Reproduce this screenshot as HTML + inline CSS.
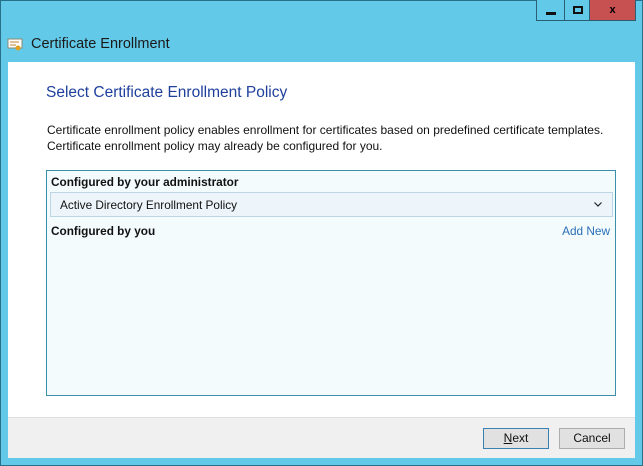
<!DOCTYPE html>
<html><head><meta charset="utf-8"><style>
*{margin:0;padding:0;box-sizing:border-box}
body{width:643px;height:466px;background:#63c9e8;position:relative;overflow:hidden;font-family:"Liberation Sans",sans-serif;box-shadow:inset 0 0 0 1px #2a6f8a}
.btn{position:absolute;top:0;height:21px;border:1px solid #2a5f73;border-top:none}
#min{left:536px;width:29px;background:#63c9e8}
#max{left:564px;width:26px;background:#63c9e8}
#cls{left:589px;width:47px;background:#c75050;color:#000;font-weight:bold;font-size:11px;text-align:center;line-height:20px}
#title{position:absolute;left:31px;top:36px;font-size:14.5px;color:#1a1a1a}
#content{position:absolute;left:8px;top:62px;width:627px;height:396px;background:#fff}
#foot{position:absolute;left:0;top:355px;width:627px;height:41px;background:#f0f0f0;border-top:1px solid #dfdfdf}
h1{position:absolute;left:38px;top:22px;font-size:15.5px;font-weight:normal;color:#1e3f9c}
#desc{position:absolute;left:39px;top:60px;font-size:12px;line-height:16px;color:#111}
#panel{position:absolute;left:38px;top:108px;width:570px;height:226px;border:1px solid #3b8fa8;background:#f3fbfd}
.lbl{position:absolute;left:4px;font-size:11.8px;font-weight:bold;color:#111}
#dd{position:absolute;left:3px;top:21px;width:563px;height:25px;border:1px solid #bcd6e4;background:#eef5fa;font-size:11.8px;color:#111;padding:5px 0 0 9px}
#add{position:absolute;right:5px;top:53px;font-size:11.8px;color:#2a6fb5}
.b{position:absolute;top:10px;height:21px;font-size:12px;text-align:center;line-height:19px;color:#111}
</style></head><body>
<div class="btn" id="min"><div style="position:absolute;left:9px;top:12px;width:10px;height:3px;background:#111"></div></div>
<div class="btn" id="max"><div style="position:absolute;left:8px;top:6px;width:10px;height:8px;border:2px solid #111"></div></div>
<div class="btn" id="cls">x</div>
<svg style="position:absolute;left:7px;top:37px" width="16" height="15"><rect x="1" y="2" width="14" height="9" fill="#fff" stroke="#8a8a70"/><line x1="3" y1="5" x2="12" y2="5" stroke="#c08030"/><line x1="3" y1="8" x2="9" y2="8" stroke="#c08030"/><circle cx="11" cy="11" r="2.5" fill="#e0a020"/></svg>
<div id="title">Certificate Enrollment</div>
<div id="content">
<h1>Select Certificate Enrollment Policy</h1>
<div id="desc">Certificate enrollment policy enables enrollment for certificates based on predefined certificate templates.<br>Certificate enrollment policy may already be configured for you.</div>
<div id="panel">
<div class="lbl" style="top:4px">Configured by your administrator</div>
<div id="dd">Active Directory Enrollment Policy<svg style="position:absolute;right:10px;top:9px" width="8" height="5"><path d="M0.5 0.5L4 4L7.5 0.5" fill="none" stroke="#222" stroke-width="1.2"/></svg></div>
<div class="lbl" style="top:53px">Configured by you</div>
<div id="add">Add New</div>
</div>
<div id="foot">
<div class="b" style="left:475px;width:66px;border:1px solid #3c7fb1;background:#e1e1e1"><u>N</u>ext</div>
<div class="b" style="left:551px;width:66px;border:1px solid #adadad;background:#e1e1e1">Cancel</div>
</div>
</div>
</body></html>
